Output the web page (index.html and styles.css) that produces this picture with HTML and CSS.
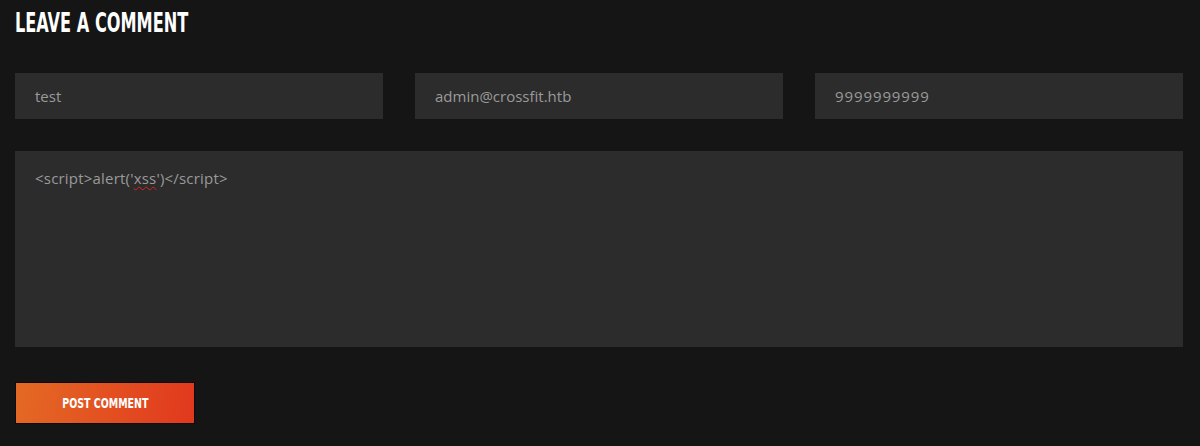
FILE: index.html
```html
<!DOCTYPE html>
<html>
<head>
<meta charset="utf-8">
<link rel="stylesheet" href="styles.css">
</head>
<body>
<section class="comment">
  <h2 class="title"><span class="narrow">LEAVE A COMMENT</span></h2>
  <form class="form">
    <div class="row">
      <div class="field">test</div>
      <div class="field">admin@crossfit.htb</div>
      <div class="field wide-digits">9999999999</div>
    </div>
    <div class="area">&lt;script&gt;alert('<span class="spell">xss</span>')&lt;/script&gt;</div>
    <button type="button" class="btn"><span class="narrow-btn">POST COMMENT</span></button>
  </form>
</section>
</body>
</html>
```
FILE: styles.css
```css
html, body {
  margin: 0;
  padding: 0;
  background: #151515;
}
.comment {
  padding: 0 17px 0 15px;
}
.title {
  margin: 0;
  padding-top: 9px;
  font-family: "DejaVu Sans Condensed", "DejaVu Sans", sans-serif;
  font-weight: bold;
  font-size: 27px;
  line-height: 28px;
  color: #fff;
}
.narrow {
  display: inline-block;
  transform: scaleX(0.665);
  transform-origin: left center;
  white-space: nowrap;
}
.form {
  margin-top: 36px;
  display: flex;
  flex-direction: column;
}
.row {
  display: flex;
  gap: 32px;
}
.field {
  flex: 1;
  height: 46px;
  box-sizing: border-box;
  padding: 0 20px;
  background: #2c2c2c;
  color: #9a9a9a;
  font-family: "Open Sans", sans-serif;
  font-size: 15px;
  display: flex;
  align-items: center;
}
.wide-digits {
  letter-spacing: 0.9px;
}
.area {
  margin-top: 32px;
  height: 196px;
  box-sizing: border-box;
  padding: 16px 20px;
  background: #2c2c2c;
  color: #9a9a9a;
  font-family: "Open Sans", sans-serif;
  font-size: 15px;
  line-height: 22px;
  letter-spacing: 0.2px;
}
.spell {
  text-decoration: underline wavy #e02020;
  text-decoration-thickness: 1px;
  text-underline-offset: 2px;
}
.btn {
  margin-top: 35px;
  align-self: flex-start;
  width: 180px;
  height: 42px;
  border: 1px solid #0c0c0c;
  background: linear-gradient(100deg, #e46a24 0%, #e1381e 100%);
  color: #fff;
  font-family: "DejaVu Sans Condensed", "DejaVu Sans", sans-serif;
  font-weight: bold;
  font-size: 14px;
  padding: 0;
}
.narrow-btn {
  display: inline-block;
  transform: scaleX(0.75);
  white-space: nowrap;
}
```
